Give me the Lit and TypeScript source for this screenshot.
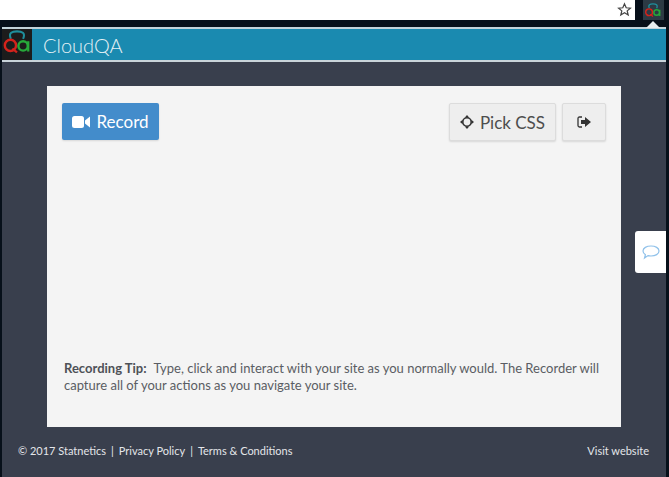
import { LitElement, html, css, svg } from "lit";
import { customElement } from "lit/decorators.js";

// cloud + Q + a mark, used in the header and the toolbar button
const logoMark = svg`
    <path d="M9.5 10.5 C6.5 4 11 2.5 16 2.5 C21 2.5 25.5 4 22.5 10.5" fill="none" stroke="#1f8f9c" stroke-width="2.2"/>
    <circle cx="9" cy="17.5" r="6" fill="none" stroke="#d3231c" stroke-width="2.6"/>
    <path d="M11 21 L16 25" stroke="#d3231c" stroke-width="2.4"/>
    <circle cx="22.5" cy="18" r="5" fill="none" stroke="#27a83a" stroke-width="2.6"/>
    <path d="M28 13 V24" stroke="#27a83a" stroke-width="2.4"/>
`;

@customElement("app-root")
class AppRoot extends LitElement {
    static styles = css`
        :host {
            display: block;
            position: relative;
            width: 669px;
            height: 477px;
            overflow: hidden;
            background: #07101a;
            font-family: Lato, "Open Sans", sans-serif;
        }
        .toolbar {
            display: flex;
            height: 20px;
        }
        .url {
            flex: 1;
            display: flex;
            justify-content: flex-end;
            align-items: center;
            padding-right: 3px;
            background: #fff;
        }
        .star {
            width: 15px;
            height: 15px;
            margin-top: -1px;
        }
        .ext {
            width: 32px;
            display: flex;
            justify-content: center;
            padding-left: 2px;
            box-sizing: content-box;
        }
        .ext-btn {
            width: 21px;
            height: 20px;
            background: #2c3a44;
            display: flex;
            align-items: center;
            justify-content: center;
        }
        .ext-btn svg {
            width: 18px;
            height: 16px;
        }
        .caret {
            position: absolute;
            top: 21px;
            left: 646px;
            width: 0;
            height: 0;
            border-left: 7px solid transparent;
            border-right: 7px solid transparent;
            border-bottom: 7px solid #e8eef0;
        }
        .popup {
            margin: 7px 3px 0 2px;
            height: 450px;
            display: flex;
            flex-direction: column;
            background: #393f4d;
            border-top: 2px solid #c3d3da;
        }
        .header {
            display: flex;
            align-items: center;
            height: 31px;
            background: #1a8ab0;
            border-bottom: 2px solid #c9d4da;
            flex: none;
        }
        .logo {
            width: 30px;
            height: 31px;
            background: #1c1c1c;
            flex: none;
        }
        .title {
            margin-left: 11px;
            font-size: 20px;
            font-weight: 300;
            color: #e4f1f5;
        }
        .card {
            flex: none;
            height: 341px;
            margin: 24px 45px 0 45px;
            padding: 17px 15px 33px 15px;
            box-sizing: border-box;
            background: #f4f4f4;
            display: flex;
            flex-direction: column;
            justify-content: space-between;
        }
        .actions {
            display: flex;
            align-items: flex-start;
            gap: 6px;
        }
        .spacer {
            flex: 1;
        }
        .btn {
            display: flex;
            align-items: center;
            justify-content: center;
            gap: 6px;
            box-sizing: border-box;
            border-radius: 2px;
            font-size: 17px;
            box-shadow: 0 1px 2px rgba(0, 0, 0, 0.12);
        }
        .record {
            width: 97px;
            height: 37px;
            background: #438ccb;
            color: #fff;
        }
        .pick {
            width: 107px;
            height: 38px;
            background: #eeeeee;
            border: 1px solid #dcdcdc;
            color: #4d4d4d;
        }
        .exit {
            width: 44px;
            height: 38px;
            background: #eeeeee;
            border: 1px solid #dcdcdc;
        }
        .tip {
            margin: 0 0 0 2px;
            font-size: 13px;
            line-height: 17px;
            color: #5a5d63;
        }
        .tip b {
            color: #4e5157;
            margin-right: 4px;
        }
        .footer {
            flex: 1;
            display: flex;
            align-items: center;
            justify-content: space-between;
            padding: 0 17px 6px 16px;
            font-size: 11px;
            color: #e4e6ea;
        }
        .sep {
            margin: 0 5px;
        }
        .chat {
            position: absolute;
            top: 231px;
            left: 635px;
            width: 31px;
            height: 42px;
            background: #fff;
            border-radius: 3px 0 0 3px;
            display: flex;
            align-items: center;
            justify-content: center;
        }
        .chat svg {
            width: 18px;
            height: 16px;
        }
    `;

    render() {
        return html`
            <div class="toolbar">
                <div class="url">
                    <svg class="star" viewBox="0 0 24 24">
                        <path
                            d="M12 3 L14.7 9.2 L21.4 9.8 L16.3 14.2 L17.9 20.8 L12 17.3 L6.1 20.8 L7.7 14.2 L2.6 9.8 L9.3 9.2 Z"
                            fill="none"
                            stroke="#444"
                            stroke-width="2"
                        />
                    </svg>
                </div>
                <div class="ext">
                    <div class="ext-btn">
                        <svg viewBox="0 0 32 27">${logoMark}</svg>
                    </div>
                </div>
            </div>
            <div class="caret"></div>
            <div class="popup">
                <div class="header">
                    <svg class="logo" viewBox="0 0 32 33">${logoMark}</svg>
                    <span class="title">CloudQA</span>
                </div>
                <div class="card">
                    <div class="actions">
                        <div class="btn record">
                            <svg width="18" height="14" viewBox="0 0 18 14">
                                <rect x="0" y="1" width="12" height="12" rx="2.5" fill="#fff" />
                                <path d="M13 5.5 L18 1.5 V12.5 L13 8.5 Z" fill="#fff" />
                            </svg>
                            Record
                        </div>
                        <div class="spacer"></div>
                        <div class="btn pick">
                            <svg width="14" height="14" viewBox="0 0 14 14">
                                <circle cx="7" cy="7" r="4.2" fill="none" stroke="#333" stroke-width="1.6" />
                                <path d="M7 0 L9.2 2.6 H4.8 Z M7 14 L9.2 11.4 H4.8 Z M0 7 L2.6 4.8 V9.2 Z M14 7 L11.4 4.8 V9.2 Z" fill="#333" />
                            </svg>
                            Pick CSS
                        </div>
                        <div class="btn exit">
                            <svg width="14" height="12" viewBox="0 0 14 12">
                                <path d="M5 1 H2.5 Q1 1 1 2.5 V9.5 Q1 11 2.5 11 H5" fill="none" stroke="#333" stroke-width="1.3" />
                                <path d="M4 4 H8 V1 L14 6 L8 11 V8 H4 Z" fill="#333" />
                            </svg>
                        </div>
                    </div>
                    <p class="tip">
                        <b>Recording Tip:</b> Type, click and interact with your site as you normally would. The Recorder will capture
                        all of your actions as you navigate your site.
                    </p>
                </div>
                <div class="footer">
                    <span>© 2017 Statnetics<span class="sep">|</span>Privacy Policy<span class="sep">|</span>Terms &amp; Conditions</span>
                    <span>Visit website</span>
                </div>
            </div>
            <div class="chat">
                <svg viewBox="0 0 18 16">
                    <path
                        d="M9 2 C13.5 2 17 4 17 7 C17 10 13.5 12 9 12 C8 12 7 11.9 6 11.6 L2.5 14 L3.4 10.7 C2 9.7 1 8.5 1 7 C1 4 4.5 2 9 2 Z"
                        fill="none"
                        stroke="#8fc1ea"
                        stroke-width="1.2"
                    />
                </svg>
            </div>
        `;
    }
}
